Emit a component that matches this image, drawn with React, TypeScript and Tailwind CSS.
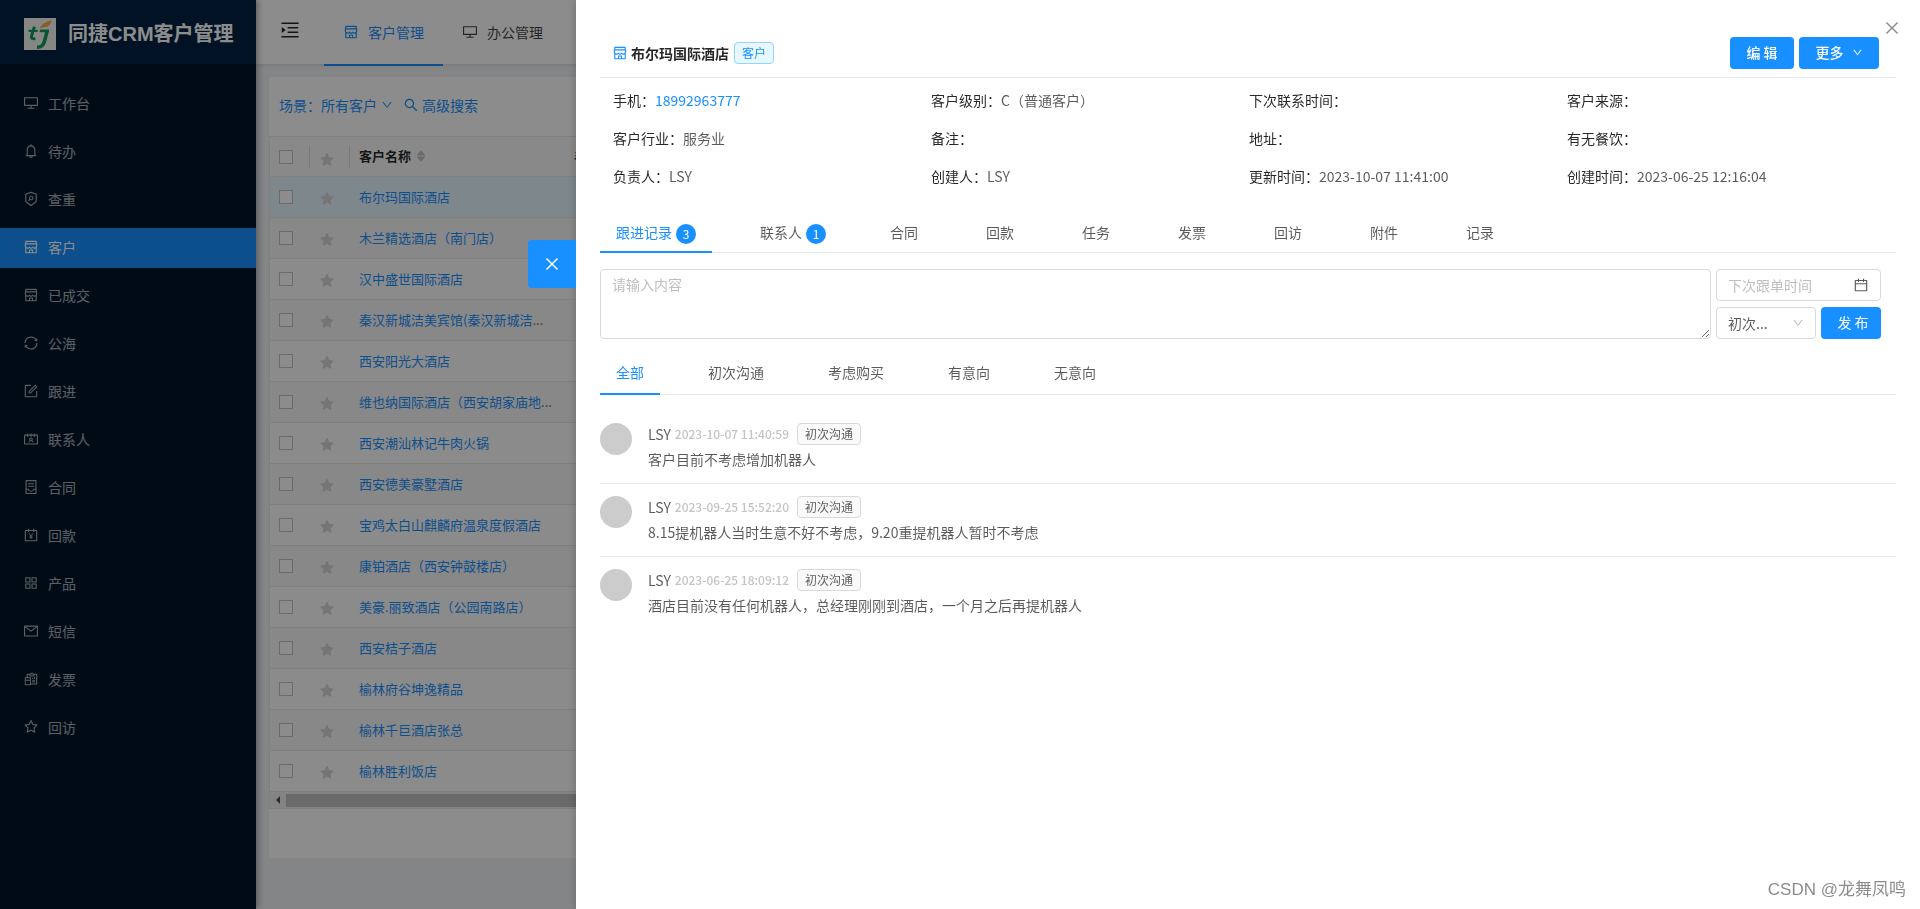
import React from 'react';
import type { IconType } from 'react-icons';
import {
  AiFillCaretDown,
  AiFillCaretUp,
  AiFillStar,
  AiOutlineAccountBook,
  AiOutlineAppstore,
  AiOutlineBell,
  AiOutlineCalendar,
  AiOutlineClose,
  AiOutlineContacts,
  AiOutlineContainer,
  AiOutlineDesktop,
  AiOutlineDown,
  AiOutlineForm,
  AiOutlineMail,
  AiOutlineMenuUnfold,
  AiOutlineReconciliation,
  AiOutlineSearch,
  AiOutlineSecurityScan,
  AiOutlineShop,
  AiOutlineStar,
  AiOutlineSync,
} from 'react-icons/ai';

const menu: { label: string; icon: IconType; active?: boolean }[] = [
  { label: '工作台', icon: AiOutlineDesktop },
  { label: '待办', icon: AiOutlineBell },
  { label: '查重', icon: AiOutlineSecurityScan },
  { label: '客户', icon: AiOutlineShop, active: true },
  { label: '已成交', icon: AiOutlineShop },
  { label: '公海', icon: AiOutlineSync },
  { label: '跟进', icon: AiOutlineForm },
  { label: '联系人', icon: AiOutlineContacts },
  { label: '合同', icon: AiOutlineContainer },
  { label: '回款', icon: AiOutlineAccountBook },
  { label: '产品', icon: AiOutlineAppstore },
  { label: '短信', icon: AiOutlineMail },
  { label: '发票', icon: AiOutlineReconciliation },
  { label: '回访', icon: AiOutlineStar },
];

const customers: { name: string; clipped?: boolean }[] = [
  { name: '布尔玛国际酒店' },
  { name: '木兰精选酒店（南门店）' },
  { name: '汉中盛世国际酒店' },
  { name: '秦汉新城洁美宾馆(秦汉新城洁', clipped: true },
  { name: '西安阳光大酒店' },
  { name: '维也纳国际酒店（西安胡家庙地', clipped: true },
  { name: '西安潮汕林记牛肉火锅' },
  { name: '西安德美豪墅酒店' },
  { name: '宝鸡太白山麒麟府温泉度假酒店' },
  { name: '康铂酒店（西安钟鼓楼店）' },
  { name: '美豪.丽致酒店（公园南路店）' },
  { name: '西安桔子酒店' },
  { name: '榆林府谷坤逸精品' },
  { name: '榆林千巨酒店张总' },
  { name: '榆林胜利饭店' },
];

const fields: { label: string; value?: string; link?: boolean }[] = [
  { label: '手机', value: '18992963777', link: true },
  { label: '客户级别', value: 'C（普通客户）' },
  { label: '下次联系时间' },
  { label: '客户来源' },
  { label: '客户行业', value: '服务业' },
  { label: '备注' },
  { label: '地址' },
  { label: '有无餐饮' },
  { label: '负责人', value: 'LSY' },
  { label: '创建人', value: 'LSY' },
  { label: '更新时间', value: '2023-10-07 11:41:00' },
  { label: '创建时间', value: '2023-06-25 12:16:04' },
];

const tabs: { label: string; count?: number }[] = [
  { label: '跟进记录', count: 3 },
  { label: '联系人', count: 1 },
  { label: '合同' },
  { label: '回款' },
  { label: '任务' },
  { label: '发票' },
  { label: '回访' },
  { label: '附件' },
  { label: '记录' },
];

const stages = ['全部', '初次沟通', '考虑购买', '有意向', '无意向'];

const records = [
  { time: '2023-10-07 11:40:59', text: '客户目前不考虑增加机器人' },
  { time: '2023-09-25 15:52:20', text: '8.15提机器人当时生意不好不考虑，9.20重提机器人暂时不考虑' },
  { time: '2023-06-25 18:09:12', text: '酒店目前没有任何机器人，总经理刚刚到酒店，一个月之后再提机器人' },
];

function Logo() {
  return (
    <svg viewBox="0 0 32 32" className="size-8 shrink-0" aria-hidden="true">
      <rect width="32" height="32" fill="#f4f4f2" />
      <g fill="none" stroke="#12995a" strokeLinejoin="round">
        <path d="M10.4 8.6 L7.4 18.4 Q6.8 21.6 11.4 20.6" strokeWidth="3" />
        <path d="M4.6 12.9 H13.6" strokeWidth="2.2" />
        <path d="M15.8 12.9 H25" strokeWidth="2.6" />
        <path d="M23.2 12.9 L20.4 23.6 Q18.8 29.4 13 29.2" strokeWidth="3.6" />
      </g>
      <path d="M15.8 10.6 Q17 5 27.6 2.2 Q26.4 8.4 21.4 9 Q17.6 9 15.8 10.6 Z" fill="#f0b040" />
    </svg>
  );
}

function Sidebar() {
  return (
    <aside className="relative z-10 w-64 shrink-0 bg-[#001529] shadow-[2px_0_6px_rgba(0,21,41,0.35)]">
      <div className="flex h-16 items-center gap-3 bg-[#002140] pt-1 pl-6">
        <Logo />
        <h1 className="font-['Liberation_Sans','Noto_Sans_CJK_SC',sans-serif] text-xl leading-8 font-bold whitespace-nowrap text-white">
          同捷CRM客户管理
        </h1>
      </div>
      <nav className="flex flex-col gap-2 pt-5">
        {menu.map(({ label, icon: Icon, active }) => (
          <a
            key={label}
            href="#"
            className={
              active
                ? 'flex h-10 items-center gap-[9px] bg-[#1890ff] pb-0.5 pl-[23px] text-white'
                : 'flex h-10 items-center gap-[9px] pb-0.5 pl-[23px] text-white/65'
            }
          >
            <Icon className="size-4" />
            {label}
          </a>
        ))}
      </nav>
    </aside>
  );
}

function TopBar() {
  return (
    <header className="flex h-16 items-center bg-white shadow-[0_1px_4px_rgba(0,21,41,0.12)]">
      <button type="button" aria-label="展开菜单" className="px-[23px] pb-1 text-black/85">
        <AiOutlineMenuUnfold className="size-[22px]" />
      </button>
      <nav className="flex">
        <a href="#" className="relative flex h-16 items-center gap-[9px] px-[19px] text-[#1890ff]">
          <AiOutlineShop className="size-4" />
          客户管理
          <span className="absolute inset-x-0 top-full h-0.5 bg-[#1890ff]" />
        </a>
        <a href="#" className="flex h-16 items-center gap-[9px] px-[19px] text-black/75">
          <AiOutlineDesktop className="size-4" />
          办公管理
        </a>
      </nav>
    </header>
  );
}

const checkbox = 'block size-3.5 appearance-none border border-[#c4c4c4] bg-white';

function CustomerTable() {
  return (
    <div className="border-b border-l border-[#e8e8e8]">
      <table className="w-full table-fixed border-separate border-spacing-0 text-[13px]">
        <thead className="bg-[#fafafa] text-left">
          <tr>
            <th className="w-10 border-y border-[#e8e8e8] p-0">
              <div className="flex h-[22px] items-center border-r border-[#dcdcdc] pl-[9px]">
                <input type="checkbox" aria-label="全选" className={checkbox} />
              </div>
            </th>
            <th className="w-10 border-y border-[#e8e8e8] p-0">
              <div className="flex h-[22px] items-end border-r border-[#dcdcdc] pl-[9px] text-[#d5d5d5]">
                <AiFillStar className="size-4" />
              </div>
            </th>
            <th className="h-[41px] w-[216px] border-y border-[#e8e8e8] px-[9px] py-0 font-semibold text-black/85">
              <div className="flex items-center gap-1 pb-0.5">
                客户名称
                <span className="flex flex-col text-xs text-[#bfbfbf]">
                  <AiFillCaretUp />
                  <AiFillCaretDown className="-mt-1.5" />
                </span>
              </div>
            </th>
            <th className="border-y border-[#e8e8e8] px-2 py-0 font-semibold text-black/85">手机</th>
          </tr>
        </thead>
        <tbody>
          {customers.map(({ name, clipped }, i) => (
            <tr key={name} className={i === 0 ? 'bg-[#e6f7ff]' : i % 2 ? 'bg-[#f7f7f7]' : 'bg-[#fdfdfd]'}>
              <td className="border-b border-[#e8e8e8] py-0 pr-0 pl-[9px]">
                <input type="checkbox" aria-label={name} className={checkbox} />
              </td>
              <td className="border-b border-[#e8e8e8] pt-1 pr-0 pb-0 pl-[9px] text-[#d5d5d5]">
                <AiFillStar className="size-4" />
              </td>
              <td className="h-[41px] border-b border-[#e8e8e8] px-[9px] py-0 whitespace-nowrap text-black/65">
                <a href="#" className="text-[#1890ff]">
                  {name}
                </a>
                {clipped && '...'}
              </td>
              <td className="border-b border-[#e8e8e8] p-0" />
            </tr>
          ))}
        </tbody>
      </table>
      <div className="flex h-4 items-center bg-[#f1f1f1]">
        <span className="flex w-4 justify-center">
          <span className="size-0 border-y-4 border-r-4 border-y-transparent border-r-[#505050]" />
        </span>
        <span className="h-[13px] flex-1 bg-[#c1c1c1]" />
      </div>
    </div>
  );
}

function ListPage() {
  return (
    <div className="min-w-0 flex-1 bg-[#f0f2f5]">
      <TopBar />
      <main className="m-[13px] rounded-xs bg-white pb-[49px]">
        <div className="flex h-[59px] items-center pb-1 pl-2.5 text-[#1890ff]">
          <button type="button" className="flex items-center gap-1">
            场景：所有客户
            <AiOutlineDown className="text-xs" />
          </button>
          <button type="button" className="ml-2.5 flex items-center gap-[3px]">
            <AiOutlineSearch className="size-4" />
            高级搜索
          </button>
        </div>
        <CustomerTable />
      </main>
    </div>
  );
}

function Composer() {
  return (
    <form className="mt-4 flex gap-[5px] pr-[15px]">
      <textarea
        aria-label="跟进内容"
        placeholder="请输入内容"
        className="h-[70px] flex-1 rounded border border-[#d9d9d9] px-[11px] py-[3px] leading-[22px] placeholder:text-[#bfbfbf]"
      />
      <div className="flex w-[165px] flex-col gap-1.5">
        <label className="flex h-8 items-center rounded border border-[#d9d9d9] px-[11px] text-black/65">
          <input
            aria-label="下次跟单时间"
            placeholder="下次跟单时间"
            className="min-w-0 flex-1 outline-none placeholder:text-[#bfbfbf]"
          />
          <AiOutlineCalendar className="size-4" />
        </label>
        <div className="flex gap-[5px]">
          <div className="relative flex-1">
            <select
              aria-label="跟进阶段"
              className="block h-8 w-full appearance-none rounded border border-[#d9d9d9] bg-white px-[11px] text-black/65"
            >
              <option>初次...</option>
            </select>
            <AiOutlineDown className="pointer-events-none absolute top-2.5 right-3 text-xs text-[#bfbfbf]" />
          </div>
          <button type="button" className="h-8 w-[60px] rounded bg-[#1890ff] pb-0.5 pl-1 text-white">
            发 布
          </button>
        </div>
      </div>
    </form>
  );
}

function Drawer() {
  return (
    <section
      aria-label="客户详情"
      className="fixed inset-y-0 right-0 z-30 w-[70%] bg-white px-6 shadow-[-2px_0_8px_rgba(0,0,0,0.15)]"
    >
      <button
        type="button"
        aria-label="收起"
        className="absolute top-60 -left-12 flex size-12 items-center justify-center rounded-l bg-[#1890ff] text-lg text-white"
      >
        <AiOutlineClose />
      </button>
      <button type="button" aria-label="关闭" className="absolute top-[19px] right-[19px] text-lg text-black/45">
        <AiOutlineClose />
      </button>

      <div className="flex items-center border-b border-[#e8e8e8] pt-[37px] pr-[17px] pb-2 pl-3">
        <AiOutlineShop className="size-4 text-[#1890ff]" />
        <h2 className="ml-[3px] font-semibold text-black/85">布尔玛国际酒店</h2>
        <span className="ml-[5px] rounded border border-[#91d5ff] bg-[#e6f7ff] px-[7px] text-xs leading-5 text-[#1890ff]">
          客户
        </span>
        <button type="button" className="ml-auto h-8 w-16 rounded bg-[#1890ff] pb-0.5 font-medium text-white">
          编 辑
        </button>
        <button
          type="button"
          className="ml-[5px] flex h-8 w-20 items-center justify-center gap-2 rounded bg-[#1890ff] pb-0.5 font-medium text-white"
        >
          更多
          <AiOutlineDown className="text-[11px]" />
        </button>
      </div>

      <dl className="grid grid-cols-4 gap-y-4 pt-[11px] pr-6">
        {fields.map(({ label, value, link }) => (
          <div key={label} className="flex pl-[13px]">
            <dt className="text-black/85">{label}：</dt>
            <dd className={link ? 'text-[#1890ff]' : 'text-black/65'}>{value}</dd>
          </div>
        ))}
      </dl>

      <div role="tablist" className="mt-[26px] flex gap-8 border-b border-[#e8e8e8]">
        {tabs.map(({ label, count }, i) => (
          <button
            key={label}
            type="button"
            role="tab"
            aria-selected={i === 0}
            className={
              i === 0
                ? '-mb-px flex h-10 items-center gap-1 border-b-2 border-[#1890ff] px-4 text-[#1890ff]'
                : '-mb-px flex h-10 items-center gap-1 border-b-2 border-transparent px-4 text-black/65'
            }
          >
            {label}
            <span
              className={
                count ? 'mt-1 size-5 rounded-full bg-[#1890ff] text-center text-xs leading-5 text-white' : ''
              }
            >
              {count}
            </span>
          </button>
        ))}
      </div>

      <Composer />

      <div role="tablist" className="mt-3 flex gap-8 border-b border-[#e8e8e8]">
        {stages.map((label, i) => (
          <button
            key={label}
            type="button"
            role="tab"
            aria-selected={i === 0}
            className={
              i === 0
                ? '-mb-px h-11 border-b-2 border-[#1890ff] px-4 text-[#1890ff]'
                : '-mb-px h-11 border-b-2 border-transparent px-4 text-black/65'
            }
          >
            {label}
          </button>
        ))}
      </div>

      <ul className="pt-4">
        {records.map(({ time, text }) => (
          <li key={time} className="flex gap-4 border-b border-[#e8e8e8] py-3 last:border-b-0">
            <span className="size-8 shrink-0 rounded-full bg-[#ccc]" />
            <div className="text-black/65">
              <div className="flex items-center">
                <span>LSY</span>
                <time className="ml-1 text-xs font-medium text-[#c4c4c4]">{time}</time>
                <span className="ml-2 rounded border border-[#d9d9d9] bg-[#fafafa] px-[7px] text-xs leading-5">
                  初次沟通
                </span>
              </div>
              <p className="mt-[3px] mb-px">{text}</p>
            </div>
          </li>
        ))}
      </ul>
    </section>
  );
}

export default function App() {
  return (
    <div className="flex min-h-screen overflow-hidden font-['Noto_Sans_CJK_SC',sans-serif] text-sm leading-[22px]">
      <Sidebar />
      <ListPage />
      <div className="fixed inset-0 z-20 bg-black/45" />
      <Drawer />
      <p className="fixed right-3.5 bottom-2 z-40 font-['Liberation_Sans','Noto_Sans_CJK_SC',sans-serif] text-[17px] text-[#8c8c8c]">
        CSDN @龙舞凤鸣
      </p>
    </div>
  );
}
